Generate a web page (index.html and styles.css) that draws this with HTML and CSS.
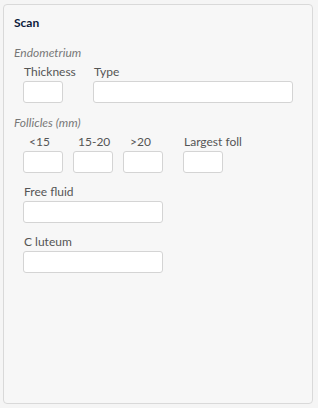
FILE: index.html
```html
<!DOCTYPE html>
<html lang="en">
  <head>
    <meta charset="utf-8" />
    <title>Scan</title>
    <link rel="stylesheet" href="styles.css">
  </head>
  <body>
    <div class="panel">
      <div class="panel-title">Scan</div>

      <div class="section-title">Endometrium</div>
      <div class="row">
        <div class="field thickness">
          <label>Thickness</label>
          <input type="text" class="box small">
        </div>
        <div class="field">
          <label>Type</label>
          <input type="text" class="box wide">
        </div>
      </div>

      <div class="section-title follicles">Follicles (mm)</div>
      <div class="row">
        <div class="field">
          <label class="pad-a">&lt;15</label>
          <input type="text" class="box small">
        </div>
        <div class="field">
          <label class="pad-b">15-20</label>
          <input type="text" class="box small">
        </div>
        <div class="field">
          <label class="pad-c">&gt;20</label>
          <input type="text" class="box small">
        </div>
        <div class="field largest">
          <label>Largest foll</label>
          <input type="text" class="box small">
        </div>
      </div>

      <div class="row stack">
        <div class="field">
          <label>Free fluid</label>
          <input type="text" class="box medium">
        </div>
      </div>

      <div class="row stack">
        <div class="field">
          <label>C luteum</label>
          <input type="text" class="box medium">
        </div>
      </div>
    </div>
  </body>
</html>
```

FILE: styles.css
```css
body {
  margin: 0;
  padding: 4px 5px 4px 3px;
  background-color: #f5f5f5;
  font-family: Lato, "Open Sans", sans-serif;
  font-size: 12px;
  color: #555;
}
.panel {
  box-sizing: border-box;
  width: 310px;
  height: 400px;
  background-color: #f7f7f7;
  border: 1px solid #d9d9d9;
  border-radius: 4px;
  padding: 10px 10px;
}
.panel-title {
  font-weight: bold;
  color: #0c1a3c;
  line-height: 16px;
}
.section-title {
  margin-top: 14px;
  font-style: italic;
  color: #777;
  line-height: 16px;
}
.section-title.follicles {
  margin-top: 12px;
}
.row {
  display: flex;
  gap: 10px;
  margin-left: 9px;
  margin-top: 3px;
}
.row.stack {
  margin-top: 11px;
}
.field {
  display: flex;
  flex-direction: column;
  align-items: flex-start;
}
.field.thickness {
  width: 60px;
}
.field label {
  line-height: 16px;
  margin-bottom: 1px;
  padding-left: 1px;
}
.field.largest {
  margin-left: 10px;
}
.pad-a { padding-left: 6px !important; }
.pad-b { padding-left: 5px !important; }
.pad-c { padding-left: 7px !important; }
.box {
  box-sizing: border-box;
  height: 22px;
  margin: 0;
  background: #fff;
  border: 1px solid #d4d4d4;
  border-radius: 3px;
  padding: 2px 4px;
  font: inherit;
}
.box.small { width: 40px; }
.box.wide { width: 200px; }
.box.medium { width: 140px; }
```
